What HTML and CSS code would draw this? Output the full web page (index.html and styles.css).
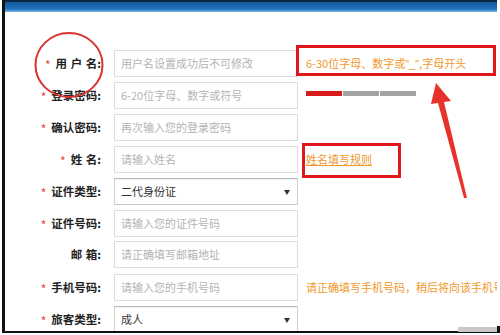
FILE: index.html
```html
<!DOCTYPE html>
<html lang="zh-CN">
<head>
<meta charset="utf-8">
<link rel="stylesheet" href="styles.css">
</head>
<body>
<div class="frame">
  <div class="topbar"></div>
  <div class="form">
    <div class="row">
      <div class="lbl"><span class="req">*</span><span class="sp">用 户 名:</span></div>
      <div class="field ph">用户名设置成功后不可修改</div>
      <div class="aside"><span class="hint">6-30位字母、数字或<span class="q">"_"</span>,字母开头</span></div>
    </div>
    <div class="row">
      <div class="lbl"><span class="req">*</span>登录密码:</div>
      <div class="field ph">6-20位字母、数字或符号</div>
      <div class="aside"><div class="strength"><span class="on"></span><span></span><span></span></div></div>
    </div>
    <div class="row">
      <div class="lbl"><span class="req">*</span>确认密码:</div>
      <div class="field ph">再次输入您的登录密码</div>
      <div class="aside"></div>
    </div>
    <div class="row">
      <div class="lbl"><span class="req">*</span><span class="sp">姓 名:</span></div>
      <div class="field ph">请输入姓名</div>
      <div class="aside"><a class="rule">姓名填写规则</a></div>
    </div>
    <div class="row">
      <div class="lbl"><span class="req">*</span>证件类型:</div>
      <div class="field select">二代身份证<span class="caret"></span></div>
      <div class="aside"></div>
    </div>
    <div class="row">
      <div class="lbl"><span class="req">*</span>证件号码:</div>
      <div class="field ph">请输入您的证件号码</div>
      <div class="aside"></div>
    </div>
    <div class="row">
      <div class="lbl"><span class="sp">邮 箱:</span></div>
      <div class="field ph">请正确填写邮箱地址</div>
      <div class="aside"></div>
    </div>
    <div class="row">
      <div class="lbl"><span class="req">*</span>手机号码:</div>
      <div class="field ph">请输入您的手机号码</div>
      <div class="aside"><span class="hint">请正确填写手机号码，稍后将向该手机号</span></div>
    </div>
    <div class="row">
      <div class="lbl"><span class="req">*</span>旅客类型:</div>
      <div class="field select">成人<span class="caret"></span></div>
      <div class="aside"></div>
    </div>
  </div>
  <div class="box box-hint"></div>
  <div class="box box-rule"></div>
  <svg class="annot" width="500" height="335" viewBox="0 0 500 335">
    <ellipse cx="69" cy="65" rx="33.5" ry="32" fill="none" stroke="#d9342f" stroke-width="2"/>
    <polygon points="436,83 451,101 444,102 467,198 464,198 438,103 431,104" fill="#e8322c"/>
  </svg>
</div>
<div class="scroll"></div>
<div class="corner"></div>
</body>
</html>
```
FILE: styles.css
```css
html, body {
  margin: 0;
  padding: 0;
  background: #fff;
}
body {
  width: 500px;
  height: 335px;
  overflow: hidden;
  position: relative;
  font-family: "Noto Sans CJK SC", "Noto Sans", sans-serif;
}
.frame {
  position: relative;
  margin-left: 2px;
  width: 495px;
  height: 333px;
  box-sizing: border-box;
  border-left: 3px solid #111;
  border-bottom: 2px solid #111;
  overflow: hidden;
}
.topbar {
  height: 12px;
  box-sizing: border-box;
  border-top: 2px solid #0b2746;
  background: linear-gradient(#14579c, #1f73c0 70%, #7fb4e2);
}
.form {
  padding-top: 37px;
  display: flex;
  flex-direction: column;
  gap: 5px;
}
.row {
  display: grid;
  grid-template-columns: 96px 184px 1fr;
  column-gap: 13px;
  height: 27px;
  align-items: center;
}
.row .aside {
  margin-left: -5px;
}
.lbl {
  text-align: right;
  font-size: 11.5px;
  font-weight: bold;
  color: #222;
  white-space: nowrap;
  line-height: 27px;
}
.sp {
  word-spacing: 1px;
}
.req {
  color: #e8453c;
  font-weight: normal;
  font-size: 12px;
  margin-right: 5px;
  position: relative;
  top: 2px;
}
.field {
  box-sizing: border-box;
  height: 27px;
  border: 1px solid #dcdcdc;
  padding-left: 6px;
  font-size: 11px;
  line-height: 25px;
  white-space: nowrap;
  overflow: hidden;
  position: relative;
}
.ph {
  color: #b4b4b4;
}
.select {
  color: #333;
  border-color: #b9b9b9 #d0d0d0 #c8c8c8 #d0d0d0;
  box-shadow: inset 0 1px 1px rgba(0,0,0,0.06);
}
.caret {
  position: absolute;
  right: 7px;
  top: 11px;
  width: 0;
  height: 0;
  border-left: 3px solid transparent;
  border-right: 3px solid transparent;
  border-top: 5px solid #333;
}
.aside {
  white-space: nowrap;
  font-size: 11px;
}
.hint {
  color: #f0982c;
  font-size: 11px;
}
.q {
  font-family: "Liberation Sans", sans-serif;
}
.strength {
  display: flex;
  gap: 1px;
  margin-top: -3px;
}
.strength span {
  width: 36px;
  height: 5px;
  background: #a3a3a3;
}
.strength span.on {
  background: #d81c1c;
}
.rule {
  color: #f0982c;
  text-decoration: underline;
  font-size: 11px;
}
.box {
  position: absolute;
  border: 3px solid #e0181b;
  box-sizing: border-box;
}
.box-hint {
  left: 291px;
  top: 45px;
  width: 200px;
  height: 31px;
}
.box-rule {
  left: 297px;
  top: 143px;
  width: 99px;
  height: 35px;
}
.annot {
  position: absolute;
  left: -5px;
  top: 0;
  pointer-events: none;
}
.scroll {
  position: absolute;
  left: 458px;
  top: 327px;
  width: 39px;
  height: 5px;
  background: #c9c9c9;
}
.corner {
  position: absolute;
  left: 497px;
  top: 326px;
  width: 3px;
  height: 7px;
  background: #111;
}
```
